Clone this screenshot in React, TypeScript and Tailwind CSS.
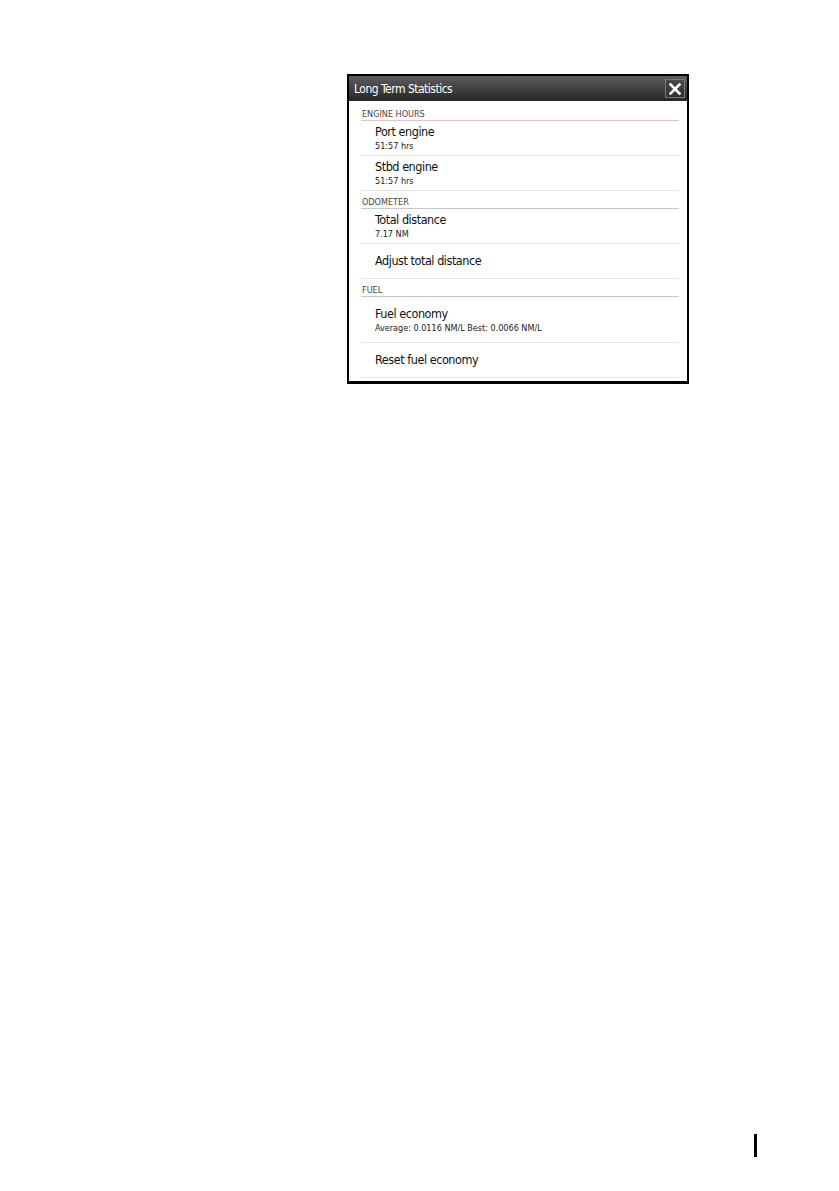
import React from "react";

const font = { fontFamily: '"DejaVu Sans Condensed", "Liberation Sans Narrow", "Open Sans", sans-serif' };

type Item = { title: string; sub?: string; tall?: boolean };

const sections: { label: string; red?: boolean; items: Item[] }[] = [
  {
    label: "ENGINE HOURS",
    red: true,
    items: [
      { title: "Port engine", sub: "51:57 hrs" },
      { title: "Stbd engine", sub: "51:57 hrs" },
    ],
  },
  {
    label: "ODOMETER",
    items: [
      { title: "Total distance", sub: "7.17 NM" },
      { title: "Adjust total distance" },
    ],
  },
  {
    label: "FUEL",
    items: [
      { title: "Fuel economy", sub: "Average: 0.0116 NM/L Best: 0.0066 NM/L", tall: true },
      { title: "Reset fuel economy" },
    ],
  },
];

const Row = ({ item }: { item: Item }) => (
  <div
    className={`flex flex-col justify-center pl-[14px] border-b border-[#e4e4e4] ${
      item.tall ? "h-[46px] pt-[1px]" : "h-[35px]"
    }`}
  >
    <span className="text-[12.5px] leading-[16px] tracking-[-0.45px] text-[#111]">{item.title}</span>
    {item.sub && <span className="text-[9px] leading-[13px] text-[#222]">{item.sub}</span>}
  </div>
);

export default function App() {
  return (
    <div className="min-h-[1191px] bg-white relative" style={font}>
      <div className="pt-[74px] pl-[347px]">
        {/* Dialog */}
        <div className="w-[342px] h-[310px] border-2 border-b-[3px] border-black bg-white flex flex-col">
          {/* Header */}
          <div className="h-[25px] flex items-center justify-between pl-[5px] pr-[2px] bg-gradient-to-b from-[#5e5e5e] to-[#262626]">
            <span className="text-white text-[12px] tracking-[-0.5px]">Long Term Statistics</span>
            <div className="w-[20px] h-[19px] border border-[#7a7a7a] bg-gradient-to-b from-[#4a4a4a] to-[#2e2e2e] flex items-center justify-center">
              <svg width="12" height="12" viewBox="0 0 12 12">
                <path d="M1.5 1.5 L10.5 10.5 M10.5 1.5 L1.5 10.5" stroke="white" strokeWidth="2.6" strokeLinecap="square" />
              </svg>
            </div>
          </div>

          {/* Body */}
          <div className="pl-[12px] pr-[8px]">
            {sections.map((s, i) => (
              <div key={s.label}>
                <div
                  className={`flex items-end border-b ${i === 0 ? "h-[20px]" : "h-[18px]"} ${
                    s.red ? "border-[#e6c4c4]" : "border-[#c8c8c8]"
                  }`}
                >
                  <span className="text-[9px] leading-[12px] text-[#444] pl-[1px]">{s.label}</span>
                </div>
                {s.items.map((it) => (
                  <Row key={it.title} item={it} />
                ))}
              </div>
            ))}
          </div>
        </div>
      </div>

      {/* page marker */}
      <div className="absolute left-[754px] top-[1134px] w-[3px] h-[23px] bg-black" />
    </div>
  );
}
